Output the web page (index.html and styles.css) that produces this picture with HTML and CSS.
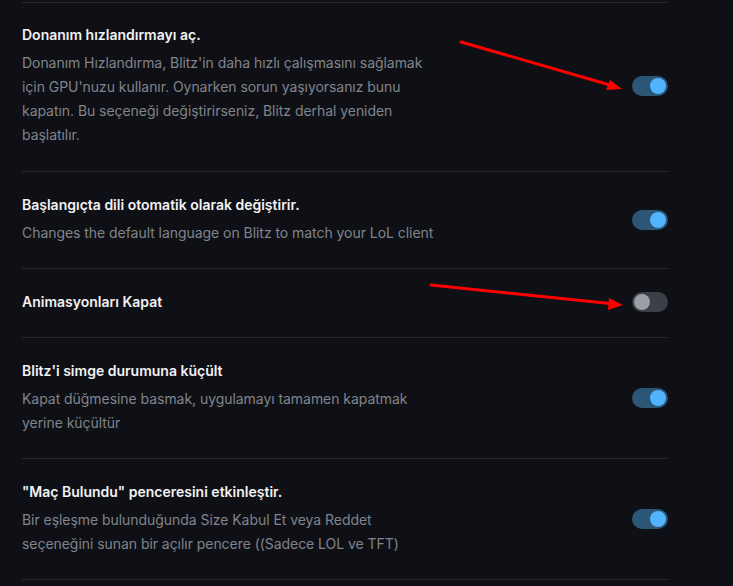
FILE: index.html
```html
<!DOCTYPE html>
<html lang="tr">
<head>
<meta charset="utf-8">
<link rel="stylesheet" href="styles.css">
</head>
<body>
<div class="list">
  <div class="row first">
    <div class="text">
      <div class="title">Donanım hızlandırmayı aç.</div>
      <div class="desc">Donanım Hızlandırma, Blitz'in daha hızlı çalışmasını sağlamak için GPU'nuzu kullanır. Oynarken sorun yaşıyorsanız bunu kapatın. Bu seçeneği değiştirirseniz, Blitz derhal yeniden başlatılır.</div>
    </div>
    <span class="toggle on"><span class="knob"></span></span>
  </div>
  <div class="row">
    <div class="text">
      <div class="title">Başlangıçta dili otomatik olarak değiştirir.</div>
      <div class="desc">Changes the default language on Blitz to match your LoL client</div>
    </div>
    <span class="toggle on"><span class="knob"></span></span>
  </div>
  <div class="row solo">
    <div class="text">
      <div class="title">Animasyonları Kapat</div>
    </div>
    <span class="toggle off"><span class="knob"></span></span>
  </div>
  <div class="row">
    <div class="text">
      <div class="title">Blitz'i simge durumuna küçült</div>
      <div class="desc">Kapat düğmesine basmak, uygulamayı tamamen kapatmak yerine küçültür</div>
    </div>
    <span class="toggle on"><span class="knob"></span></span>
  </div>
  <div class="row last">
    <div class="text">
      <div class="title">"Maç Bulundu" penceresini etkinleştir.</div>
      <div class="desc">Bir eşleşme bulunduğunda Size Kabul Et veya Reddet seçeneğini sunan bir açılır pencere ((Sadece LOL ve TFT)</div>
    </div>
    <span class="toggle on"><span class="knob"></span></span>
  </div>
</div>
<svg class="annot" width="733" height="586" viewBox="0 0 733 586">
  <line x1="461" y1="42" x2="610" y2="85" stroke="#ff0000" stroke-width="3" stroke-linecap="round"/>
  <polygon points="622,89 606,90 610,80" fill="#ff0000"/>
  <line x1="431" y1="285" x2="610" y2="303.5" stroke="#ff0000" stroke-width="3" stroke-linecap="round"/>
  <polygon points="623,305 608,310 609,298" fill="#ff0000"/>
</svg>
</body>
</html>
```
FILE: styles.css
```css
html, body {
  margin: 0;
  padding: 0;
  background: #0f1015;
  height: 100%;
  overflow: hidden;
}
body {
  position: relative;
  font-family: Inter, "Noto Sans", "Liberation Sans", sans-serif;
}
.list {
  width: 646px;
  margin: 2px 0 0 22px;
}
.row {
  display: flex;
  align-items: center;
  justify-content: space-between;
  border-top: 1px solid #25272d;
  padding: 22px 0 23px;
}
.row.first {
  padding: 21px 0 24px;
}
.row.solo {
  padding: 22px 0 24px;
}
.row.last {
  border-bottom: 1px solid #25272d;
}
.title {
  color: #f2f2f4;
  font-size: 14px;
  font-weight: 600;
  line-height: 22px;
}
.desc {
  margin-top: 5px;
  color: #80848c;
  font-size: 14px;
  line-height: 24px;
  letter-spacing: -0.05px;
  max-width: 420px;
}
.toggle {
  flex: none;
  width: 36px;
  height: 20px;
  border-radius: 10px;
  box-sizing: border-box;
  padding: 2px;
  display: flex;
}
.toggle .knob {
  width: 16px;
  height: 16px;
  border-radius: 50%;
}
.toggle.on {
  background: #2b5676;
  justify-content: flex-end;
}
.toggle.on .knob {
  background: #52b3ff;
}
.toggle.off {
  background: #3d3f46;
  justify-content: flex-start;
}
.toggle.off .knob {
  background: #9c9ea6;
}
.annot {
  position: absolute;
  left: 0;
  top: 0;
  pointer-events: none;
}
```
